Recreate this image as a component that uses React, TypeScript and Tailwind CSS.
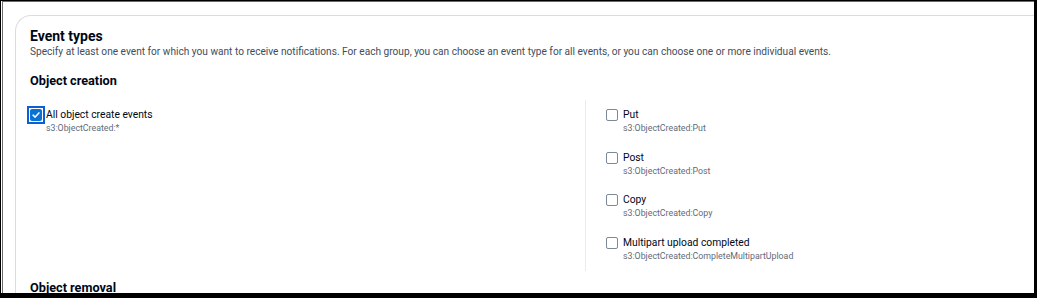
import React from "react";

interface EventOption {
	label: string;
	api: string;
	checked?: boolean;
}

const allCreate: EventOption = {
	label: "All object create events",
	api: "s3:ObjectCreated:*",
	checked: true,
};

const createEvents: EventOption[] = [
	{ label: "Put", api: "s3:ObjectCreated:Put" },
	{ label: "Post", api: "s3:ObjectCreated:Post" },
	{ label: "Copy", api: "s3:ObjectCreated:Copy" },
	{ label: "Multipart upload completed", api: "s3:ObjectCreated:CompleteMultipartUpload" },
];

function Checkbox({ checked }: { checked?: boolean }) {
	if (checked) {
		return (
			<span className="relative mt-px flex h-3 w-3 shrink-0 items-center justify-center rounded-[2px] bg-[#0972d3]">
				<span className="absolute -inset-[3px] border-2 border-[#0a5fd6]" />
				<svg viewBox="0 0 12 12" className="h-[10px] w-[10px]" fill="none">
					<path d="M2.5 6.2 L5 8.5 L9.5 3.5" stroke="white" strokeWidth="1.8" strokeLinecap="round" strokeLinejoin="round" />
				</svg>
			</span>
		);
	}
	return <span className="mt-px h-3 w-3 shrink-0 rounded-[2px] border-[1.5px] border-[#7d8998] bg-white" />;
}

function EventItem({ item }: { item: EventOption }) {
	return (
		<div className={item.checked ? "flex gap-[4px]" : "flex gap-[5px]"}>
			<Checkbox checked={item.checked} />
			<div className="flex flex-col">
				<span className="text-[10.3px] leading-[14px] text-[#000716]">{item.label}</span>
				<span className="text-[8.8px] leading-[12px] text-[#5f6b7a]">{item.api}</span>
			</div>
		</div>
	);
}

export default function App() {
	return (
		<div
			className="h-[298px] w-[1037px] overflow-hidden bg-black pb-[5px] pl-px pr-[3px] pt-px"
			style={{ fontFamily: 'Roboto, "Noto Sans", sans-serif' }}
		>
			<div className="h-full bg-white pl-px">
				<div className="h-full overflow-hidden border-l border-t border-[#6b6b6b] pl-3 pt-[13px]">
					<div className="-mr-8 h-[320px] rounded-tl-2xl border-l border-t border-[#dcdcdc] pl-[14px] pt-[11px]">
						<h2 className="text-[14px] font-bold leading-[18px] text-[#000716]">Event types</h2>
						<p className="text-[10.15px] leading-[14px] text-[#414d5c]">
							Specify at least one event for which you want to receive notifications. For each group, you can choose an event type for all events, or you can choose one or more individual events.
						</p>
						<h3 className="mt-[13px] text-[12.7px] font-bold leading-[18px] text-[#000716]">Object creation</h3>
						<div className="mt-[10px] grid w-[1000px] grid-cols-[555px_1fr]">
							<div className="pt-[8px]">
								<EventItem item={allCreate} />
							</div>
							<div className="flex flex-col gap-[16.5px] border-l border-[#e9ebed] pb-[9px] pl-[20px] pt-[8px]">
								{createEvents.map((e) => (
									<EventItem key={e.label} item={e} />
								))}
							</div>
						</div>
						<h3 className="mt-[8px] text-[12.7px] font-bold leading-[18px] text-[#000716]">Object removal</h3>
					</div>
				</div>
			</div>
		</div>
	);
}
